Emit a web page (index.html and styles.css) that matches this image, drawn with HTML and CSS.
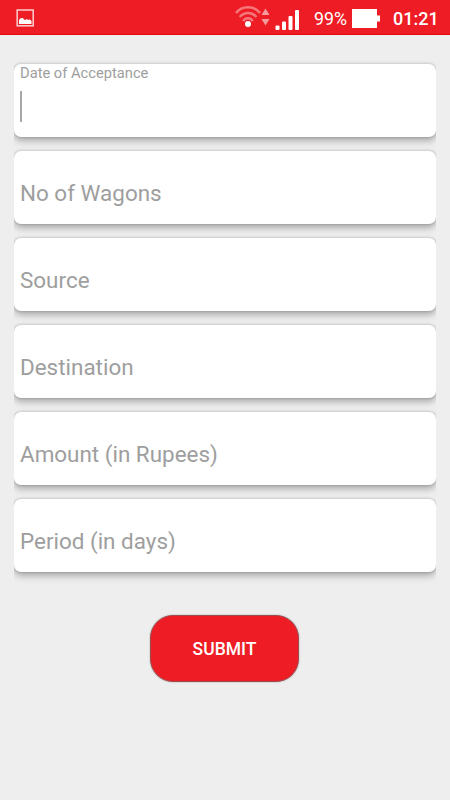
FILE: index.html
```html
<!DOCTYPE html>
<html lang="en">
<head>
<meta charset="utf-8">
<meta name="viewport" content="width=device-width">
<title>Submit details</title>
<link rel="stylesheet" href="styles.css">
</head>
<body>
<header class="status">
  <svg class="picture" width="18" height="18" viewBox="0 0 18 18"><rect x="1.200" y="1" width="16" height="15.800" fill="none" stroke="#fcc5c7" stroke-width="1.600"/><path d="M3 15V12Q3 9.500 5 9.200Q7 8.500 8 10.500L9 11L11 10L12 11L14 10.500L15.500 12V15Z" fill="#fff"/></svg>
  <svg class="wifi" width="36" height="24" viewBox="0 0 36 24"><g fill="none" stroke="#f4777b" stroke-width="2.500"><path d="M1 8C7 .2 19 .2 25 8"/><path d="M4.700 12C9 6.500 17 6.500 21.300 12"/><path d="M8.200 16C10.500 12.200 15.500 12.200 17.800 16"/></g><circle cx="13" cy="19" r="3" fill="#fff"/><path d="M26.500 10L30.500 3.500L34.500 10ZM26.500 14H34.500L30.500 20.500Z" fill="#f69a9d"/></svg>
  <svg class="signal" width="25" height="20" viewBox="0 0 25 20" fill="#fff"><rect x=".5" y="15.500" width="4" height="4.500" rx="1"/><rect x="7" y="11.500" width="4" height="8.500" rx="1"/><rect x="13.500" y="6" width="4" height="14" rx="1"/><rect x="20" y="0" width="4" height="20" rx="1"/></svg>
  <span class="percent">99%</span>
  <svg class="battery" width="28" height="19" viewBox="0 0 28 19" fill="#fff"><path d="M0 0H25V6.500H28V12.500H25V19H0Z"/></svg>
  <span class="clock">01:21</span>
</header>
<main>
  <form class="fields">
    <div class="field active"><label>Date of Acceptance</label><span class="caret"></span></div>
    <div class="field">No of Wagons</div>
    <div class="field">Source</div>
    <div class="field">Destination</div>
    <div class="field">Amount (in Rupees)</div>
    <div class="field">Period (in days)</div>
  </form>
  <button class="submit" type="button">SUBMIT</button>
</main>
</body>
</html>
```
FILE: styles.css
```css
* { box-sizing: border-box; }
body { margin: 0; height: 800px; overflow: hidden; background: #eee; font-family: Roboto, sans-serif; }
svg { display: block; flex: none; }
.status { display: flex; align-items: flex-start; height: 35px; padding-left: 16px; background: #ee1d25; border-bottom: 1px solid #e3060e; color: #fff; }
.picture { margin-top: 9px; }
.wifi { margin: 5px 0 0 201px; }
.signal { margin: 10px 0 0 4px; }
.percent { width: 34px; margin: 7px 0 0 14px; font-size: 17.800px; line-height: 24px; white-space: nowrap; }
.battery { margin: 9px 0 0 4px; }
.clock { margin: 7px 0 0 13px; font-size: 18px; font-weight: 500; line-height: 24px; }
main { display: flex; flex-direction: column; align-items: center; }
.fields { display: flex; flex-direction: column; gap: 14px; width: 422px; padding: 29px 0 13px; overflow: hidden; }
.field { height: 73px; padding: 29px 6px 0; border-radius: 7px; background: #fff; color: #9e9e9e; font-size: 22.450px; line-height: 26px; box-shadow: 0 4px 7px rgba(0,0,0,.28), 0 0 3px rgba(0,0,0,.24); }
.active { padding-top: 0; }
.active label { display: block; height: 27px; padding-top: 1px; font-size: 14.700px; line-height: 17px; }
.caret { display: block; width: 2px; height: 31px; background: #a8a8a8; }
.submit { width: 149px; height: 67px; margin: 30px 1px 0 0; padding: 0; border: 1px solid #9e4b4e; border-radius: 23px; background: #ee1d25; color: #fff; font: 500 17.500px/20px Roboto, sans-serif; box-shadow: 0 0 2px rgba(0,0,0,.3); }
```
